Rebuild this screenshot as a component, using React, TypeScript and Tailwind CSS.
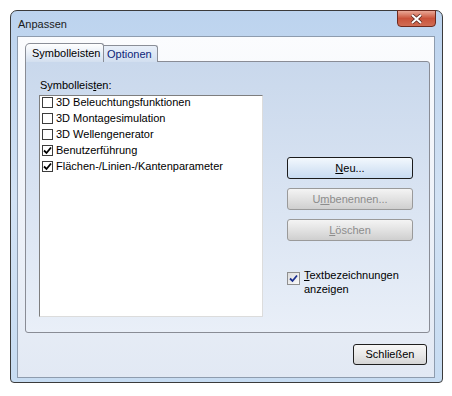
import React from "react";

const font = { fontFamily: '"Liberation Sans", Arial, sans-serif' };

type Item = { label: string; checked: boolean };

const items: Item[] = [
  { label: "3D Beleuchtungsfunktionen", checked: false },
  { label: "3D Montagesimulation", checked: false },
  { label: "3D Wellengenerator", checked: false },
  { label: "Benutzerführung", checked: true },
  { label: "Flächen-/Linien-/Kantenparameter", checked: true },
];

function Check({ color = "#000" }: { color?: string }) {
  return (
    <svg width="9" height="9" viewBox="0 0 9 9">
      <path d="M1 4.5 L3.5 7 L8 1.5" fill="none" stroke={color} strokeWidth="1.8" />
    </svg>
  );
}

function ListRow({ item }: { item: Item }) {
  return (
    <div className="flex items-start h-[16px]">
      <div className="mt-[1px] w-[11px] h-[11px] border border-[#3c3c3c] bg-white flex items-center justify-center">
        {item.checked && <Check />}
      </div>
      <span className="ml-[3px] leading-[13px] text-[11px] text-black whitespace-nowrap">
        {item.label}
      </span>
    </div>
  );
}

function Btn({
  children,
  disabled,
  primary,
}: {
  children: React.ReactNode;
  disabled?: boolean;
  primary?: boolean;
}) {
  const look = disabled
    ? "border-[#9a9a9a] bg-gradient-to-b from-[#f4f4f4] via-[#e2e2e2] to-[#cfcfcf] text-[#8c8c8c]"
    : primary
    ? "border-[#1c1c1c] bg-gradient-to-b from-[#f3f8fd] via-[#dde9f7] to-[#c9dcf2] text-black"
    : "border-[#2a2a2a] bg-gradient-to-b from-[#f6f6f6] via-[#e8e8e8] to-[#d6d6d6] text-black";
  return (
    <div
      className={`w-[126px] h-[22px] rounded-[3px] border flex items-center justify-center text-[11px] ${look}`}
    >
      {children}
    </div>
  );
}

export default function App() {
  return (
    <div className="w-[452px] h-[396px] bg-white pt-[10px] pl-[10px]" style={font}>
      <div className="w-[433px] h-[373px] rounded-t-[7px] rounded-b-[4px] border border-[#3b3b3b] bg-gradient-to-b from-[#bcd3ee] via-[#d2e2f4] to-[#c7dcf2] flex flex-col">
        {/* title bar */}
        <div className="h-[25px] flex items-start justify-between">
          <span className="pl-[7px] pt-[5px] text-[11px] text-[#1b1b1b]">Anpassen</span>
          <div className="-mt-[1px] mr-[6px] w-[39px] h-[17px] rounded-b-[4px] border border-[#6e2a1e] bg-gradient-to-b from-[#e9a897] via-[#c9523a] to-[#d06d55] flex items-center justify-center">
            <svg width="13" height="10" viewBox="0 0 13 10">
              <path d="M2 1 L11 9 M11 1 L2 9" stroke="#5a2a22" strokeWidth="3.6" />
              <path d="M2 1 L11 9 M11 1 L2 9" stroke="#ffffff" strokeWidth="2" />
            </svg>
          </div>
        </div>

        {/* client */}
        <div className="ml-[6px] w-[418px] h-[342px] border border-[#8e9cae] bg-gradient-to-b from-[#fbfcfe] to-[#e2e9f4] pl-[7px] pr-[4px] pt-[6px] flex flex-col">
          {/* tabs */}
          <div className="flex items-end h-[19px] relative z-10">
            <div className="w-[79px] h-[19px] border border-b-0 border-[#8a8e97] rounded-tl-[5px] rounded-tr-[3px] bg-gradient-to-b from-[#ffffff] to-[#d3dfef] flex items-center pl-[6px] text-[11px] text-black">
              Symbolleisten
            </div>
            <div className="w-[54px] h-[17px] border border-b-0 border-l-0 border-[#8a8e97] rounded-tr-[3px] bg-gradient-to-b from-[#e8eff9] to-[#d2dff0] flex items-center pl-[3px] text-[11px] text-[#0d1f78]">
              Optionen
            </div>
          </div>

          {/* panel */}
          <div className="-mt-[1px] w-[405px] h-[272px] border border-[#898c95] rounded-b-[3px] rounded-tr-[3px] bg-gradient-to-b from-[#c9d8ec] to-[#e9eff8] pl-[13px] pt-[17px] flex">
            <div className="flex flex-col">
              <span className="text-[11px] leading-[13px] text-black pl-[1px]">
                Symbolleis<span className="underline">t</span>en:
              </span>
              <div className="mt-[3px] w-[224px] h-[222px] bg-white border border-t-[#7e7e7e] border-l-[#7e7e7e] border-r-[#dcdcdc] border-b-[#dcdcdc] pl-[2px] pt-[0px]">
                {items.map((it) => (
                  <ListRow key={it.label} item={it} />
                ))}
              </div>
            </div>

            <div className="ml-[24px] pt-[78px] flex flex-col">
              <Btn primary>
                <span>
                  <span className="underline">N</span>eu...
                </span>
              </Btn>
              <div className="h-[9px]" />
              <Btn disabled>
                <span>
                  U<span className="underline">m</span>benennen...
                </span>
              </Btn>
              <div className="h-[9px]" />
              <Btn disabled>
                <span>
                  <span className="underline">L</span>öschen
                </span>
              </Btn>

              <div className="mt-[27px] flex items-start">
                <div className="mt-[4px] w-[13px] h-[13px] border border-[#8f8f8f] bg-gradient-to-br from-[#dcdcdc] to-[#fbfbfb] flex items-center justify-center">
                  <Check color="#1b2f8f" />
                </div>
                <span className="ml-[4px] text-[11px] leading-[14px] text-black">
                  <span className="underline">T</span>extbezeichnungen
                  <br />
                  anzeigen
                </span>
              </div>
            </div>
          </div>

          {/* footer */}
          <div className="flex justify-end pr-[3px] pt-[11px]">
            <div className="w-[74px] h-[21px] rounded-[3px] border border-[#1f1f1f] bg-gradient-to-b from-[#f7f7f7] via-[#e9e9e9] to-[#d5d5d5] flex items-center justify-center text-[11px] text-black">
              Schließen
            </div>
          </div>
        </div>
      </div>
    </div>
  );
}
